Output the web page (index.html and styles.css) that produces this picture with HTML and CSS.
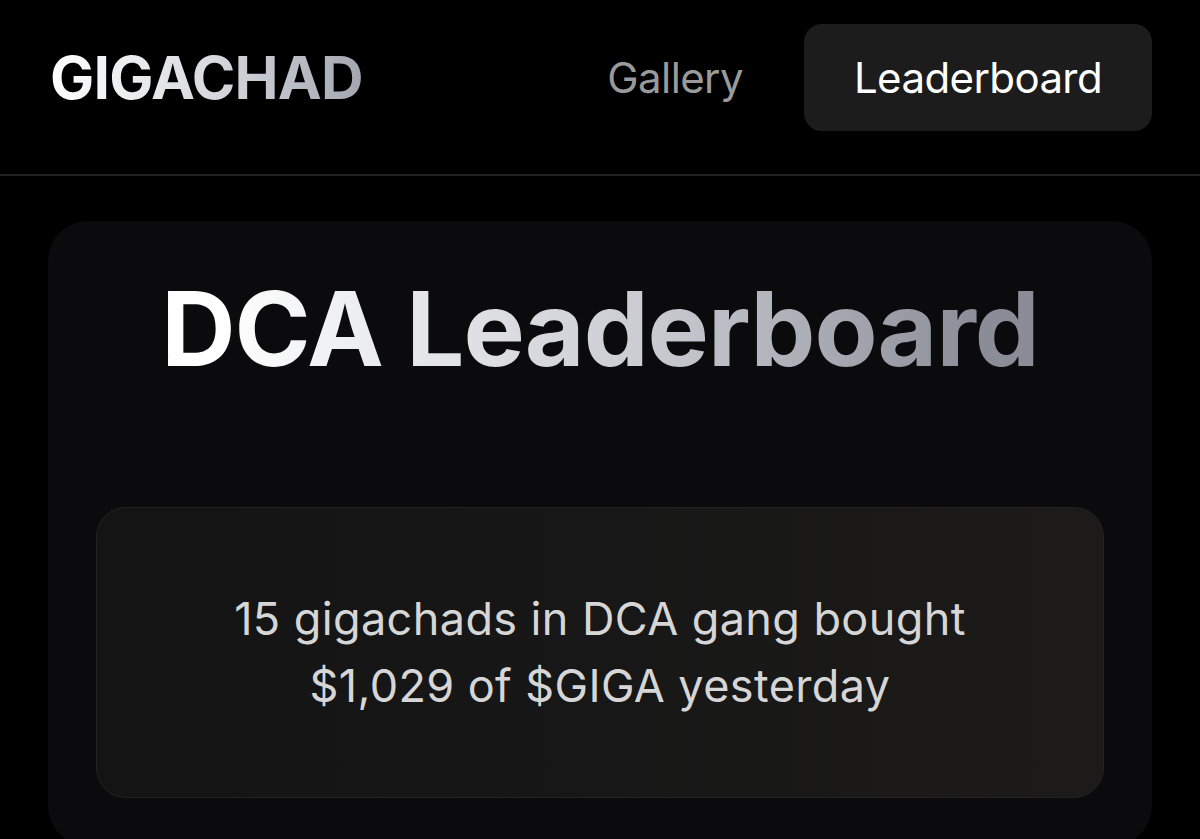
FILE: index.html
```html
<!DOCTYPE html>
<html lang="en">

<head>
  <meta charset="UTF-8">
  <meta name="viewport" content="width=device-width, initial-scale=1.0">
  <title>GIGACHAD - DCA Leaderboard</title>

  <link rel="stylesheet" href="styles.css">
</head>

<body>
  <header class="topbar">
    <a class="logo" href="#">GIGACHAD</a>
    <nav class="nav">
      <a class="nav-link" href="#">Gallery</a>
      <a class="nav-link active" href="#">Leaderboard</a>
    </nav>
  </header>

  <main class="card">
    <h1 class="title">DCA Leaderboard</h1>

    <div class="summary">
      <p>15 gigachads in DCA gang bought<br>$1,029 of $GIGA yesterday</p>
    </div>
  </main>
</body>

</html>
```

FILE: styles.css
```css
* {
  box-sizing: border-box;
}

body {
  margin: 0;
  min-height: 100vh;
  background-color: #000;
  font-family: Inter, "Noto Sans", sans-serif;
  overflow: hidden;
}

a {
  text-decoration: none;
}

.topbar {
  display: flex;
  align-items: center;
  justify-content: space-between;
  padding: 24px 48px 43px 50px;
  border-bottom: 2px solid #222224;
}

.logo {
  font-size: 59px;
  font-weight: 700;
  letter-spacing: -0.8px;
  background: linear-gradient(90deg, #ffffff 0%, #d9dbe0 50%, #a3a6b0 100%);
  -webkit-background-clip: text;
  background-clip: text;
  color: transparent;
}

.nav {
  display: flex;
  align-items: center;
  gap: 11px;
}

.nav-link {
  display: block;
  padding: 0 50px;
  height: 107px;
  line-height: 107px;
  font-size: 42px;
  letter-spacing: -0.6px;
  color: #9a9a9a;
  border-radius: 18px;
}

.nav-link.active {
  color: #fff;
  background-color: #1c1c1d;
}

.card {
  margin: 45px 48px 0;
  padding: 46px 48px 48px;
  background-color: #0b0b0d;
  border-radius: 40px;
}

.title {
  margin: 0 0 115px;
  text-align: center;
  font-size: 103px;
  font-weight: 700;
  line-height: 1.21;
  letter-spacing: -1px;
  background: linear-gradient(90deg, #ffffff 12%, #c9cbd1 55%, #8a8d97 88%);
  -webkit-background-clip: text;
  background-clip: text;
  color: transparent;
}

.summary {
  padding: 77px 40px;
  border: 1px solid #232323;
  border-radius: 30px;
  background: linear-gradient(90deg, #141415 0%, #171717 50%, #1c1b19 100%);
}

.summary p {
  margin: 0;
  text-align: center;
  font-size: 45px;
  line-height: 1.5;
  letter-spacing: 0.4px;
  color: #d6d6d6;
}
```
